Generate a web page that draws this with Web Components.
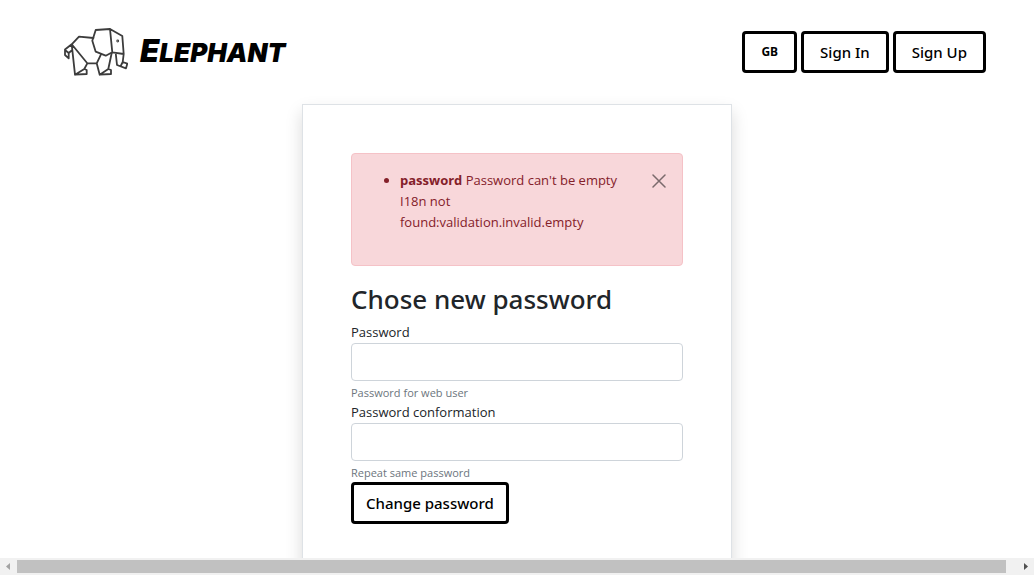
<!DOCTYPE html>
<html lang="en">
<head>
<meta charset="utf-8">
<meta name="viewport" content="width=device-width, initial-scale=1">
<title>Elephant</title>
<style>
body { margin: 0; background: #fff; color: #212529; font: 400 13px/21px "Open Sans", "Noto Sans", sans-serif; }
</style>
</head>
<body>
<app-shell>
  <site-header slot="header">
    <brand-logo slot="brand"></brand-logo>
    <outline-button small>GB</outline-button>
    <outline-button>Sign In</outline-button>
    <outline-button>Sign Up</outline-button>
  </site-header>
  <form-card>
    <alert-box><b>password</b> Password can't be empty I18n not found:validation.invalid.empty</alert-box>
    <card-title>Chose new password</card-title>
    <password-field label="Password" hint="Password for web user"></password-field>
    <password-field label="Password conformation" hint="Repeat same password"></password-field>
    <outline-button submit>Change password</outline-button>
  </form-card>
  <scroll-strip slot="footer"></scroll-strip>
</app-shell>
<script>
function define(name, html, setup) {
  const template = document.createElement('template');
  template.innerHTML = html;
  customElements.define(name, class extends HTMLElement {
    constructor() {
      super();
      this.attachShadow({ mode: 'open' }).append(template.content.cloneNode(true));
    }
    connectedCallback() { if (setup) setup(this, this.shadowRoot); }
  });
}

define('app-shell', `
<style>
:host { display: flex; flex-direction: column; height: 100vh; }
main { flex: 1; min-height: 0; overflow: hidden; }
</style>
<main><slot name="header"></slot><slot></slot></main>
<slot name="footer"></slot>`);

define('site-header', `
<style>
:host { display: block; }
header { display: flex; align-items: center; justify-content: space-between; padding: 24px 48px 24px 64px; height: 56px; }
nav { display: flex; gap: 4px; }
</style>
<header><slot name="brand"></slot><nav><slot></slot></nav></header>`);

define('brand-logo', `
<style>
:host { display: block; }
a { display: flex; align-items: center; gap: 12px; color: #000; text-decoration: none; }
svg { width: 64px; height: 48px; fill: none; stroke: #3c3c3c; stroke-width: 1.8; stroke-linejoin: round; stroke-linecap: round; }
span { display: block; font: italic 900 26px/46px Inter, "Open Sans", sans-serif; text-transform: uppercase; }
span::first-letter { font-size: 31px; }
</style>
<a href="#">
<svg viewBox="0 0 64 48" aria-hidden="true">
<path d="M29.500 10 15 8.700 7.700 16.300 1 21.500V27L4.700 30.300V25L1 22M4.700 25 8.300 22 7.700 16.300 11 46.700 22.700 46V42L20.300 41 23.300 35.300 7.700 16.300M20.300 41 11 46.700M23.300 35.300H32.700L37 26.300M32.700 35.300 35.700 46.700 47 46V42L44.300 41 47.700 25M44.300 41 35.700 46.700"/>
<path d="M31.700 2 46 1 48.300 24.300 41.700 27.700 31.700 23.700 28.300 12.700ZM46 1 58.300 8 59.700 26 48.300 24.300M51.700 25 53 37 62 40.300 63.300 35.700 58.700 34 59.700 26M58.700 34 56.700 38"/>
<circle cx="53.700" cy="13" r=".5"/>
</svg>
<span>Elephant</span></a>`);

define('outline-button', `
<style>
:host { display: inline-block; vertical-align: top; }
button { display: block; box-sizing: border-box; height: 42px; padding: 0 16px; border: 3px solid #000; border-radius: 4px; background: #fff; color: #000; font: 500 15px/24px "Noto Sans", "Open Sans", sans-serif; cursor: pointer; }
:host([small]) button { font-size: 12px; font-weight: 700; }
:host([submit]) button { padding: 0 12px; }
</style>
<button type="button"><slot></slot></button>`);

define('form-card', `
<style>
:host { display: block; }
section { box-sizing: border-box; max-width: 430px; margin: 0 auto; padding: 48px; border: 1px solid #dee2e6; background: #fff; box-shadow: 0 8px 16px rgba(0,0,0,.15); }
</style>
<section><slot></slot></section>`);

define('alert-box', `
<style>
:host { display: block; margin-bottom: 16px; }
div { display: flex; align-items: flex-start; justify-content: space-between; padding: 16px; border: 1px solid #f5c2c7; border-radius: 4px; background: #f8d7da; color: #842029; }
ul { margin: 0 0 16px; padding-left: 32px; flex: 0 1 234px; }
::slotted(b) { font-weight: 700; }
button { display: block; padding: 4px 0; border: 0; background: none; opacity: .5; cursor: pointer; }
svg { display: block; width: 14px; height: 14px; stroke: #000; stroke-width: 1.5; stroke-linecap: round; }
</style>
<div role="alert"><ul><li><slot></slot></li></ul>
<button type="button" aria-label="Close"><svg viewBox="0 0 14 14"><path d="M1 1 13 13M13 1 1 13"/></svg></button></div>`);

define('card-title', `
<style>
:host { display: block; }
h1 { margin: 0 0 6px; font: 500 26px/34px "Noto Sans", "Open Sans", sans-serif; }
</style>
<h1><slot></slot></h1>`);

define('password-field', `
<style>
:host { display: block; }
label, small { display: block; }
input { display: block; box-sizing: border-box; width: 100%; height: 38px; padding: 6px 12px; border: 1px solid #ced4da; border-radius: 4px; background: #fff; font: inherit; }
small { height: 21px; font-size: 11px; line-height: 24px; color: #6c757d; }
</style>
<label for="field"></label><input id="field" type="password" aria-describedby="hint"><small id="hint"></small>`,
(host, root) => {
  root.querySelector('label').textContent = host.getAttribute('label');
  root.querySelector('small').textContent = host.getAttribute('hint');
});

define('scroll-strip', `
<style>
:host { display: flex; flex: none; align-items: center; height: 17px; background: #f1f1f1; }
i { flex: 1; height: 13px; background: #c1c1c1; }
svg { width: 17px; height: 17px; fill: #a3a3a3; }
svg:last-child { width: 28px; fill: #505050; }
</style>
<svg viewBox="0 0 17 17"><path d="M10 5V12L6 8.500Z"/></svg><i></i><svg viewBox="0 0 28 17"><path d="M18 5V12L22 8.500Z"/></svg>`);
</script>
</body>
</html>
